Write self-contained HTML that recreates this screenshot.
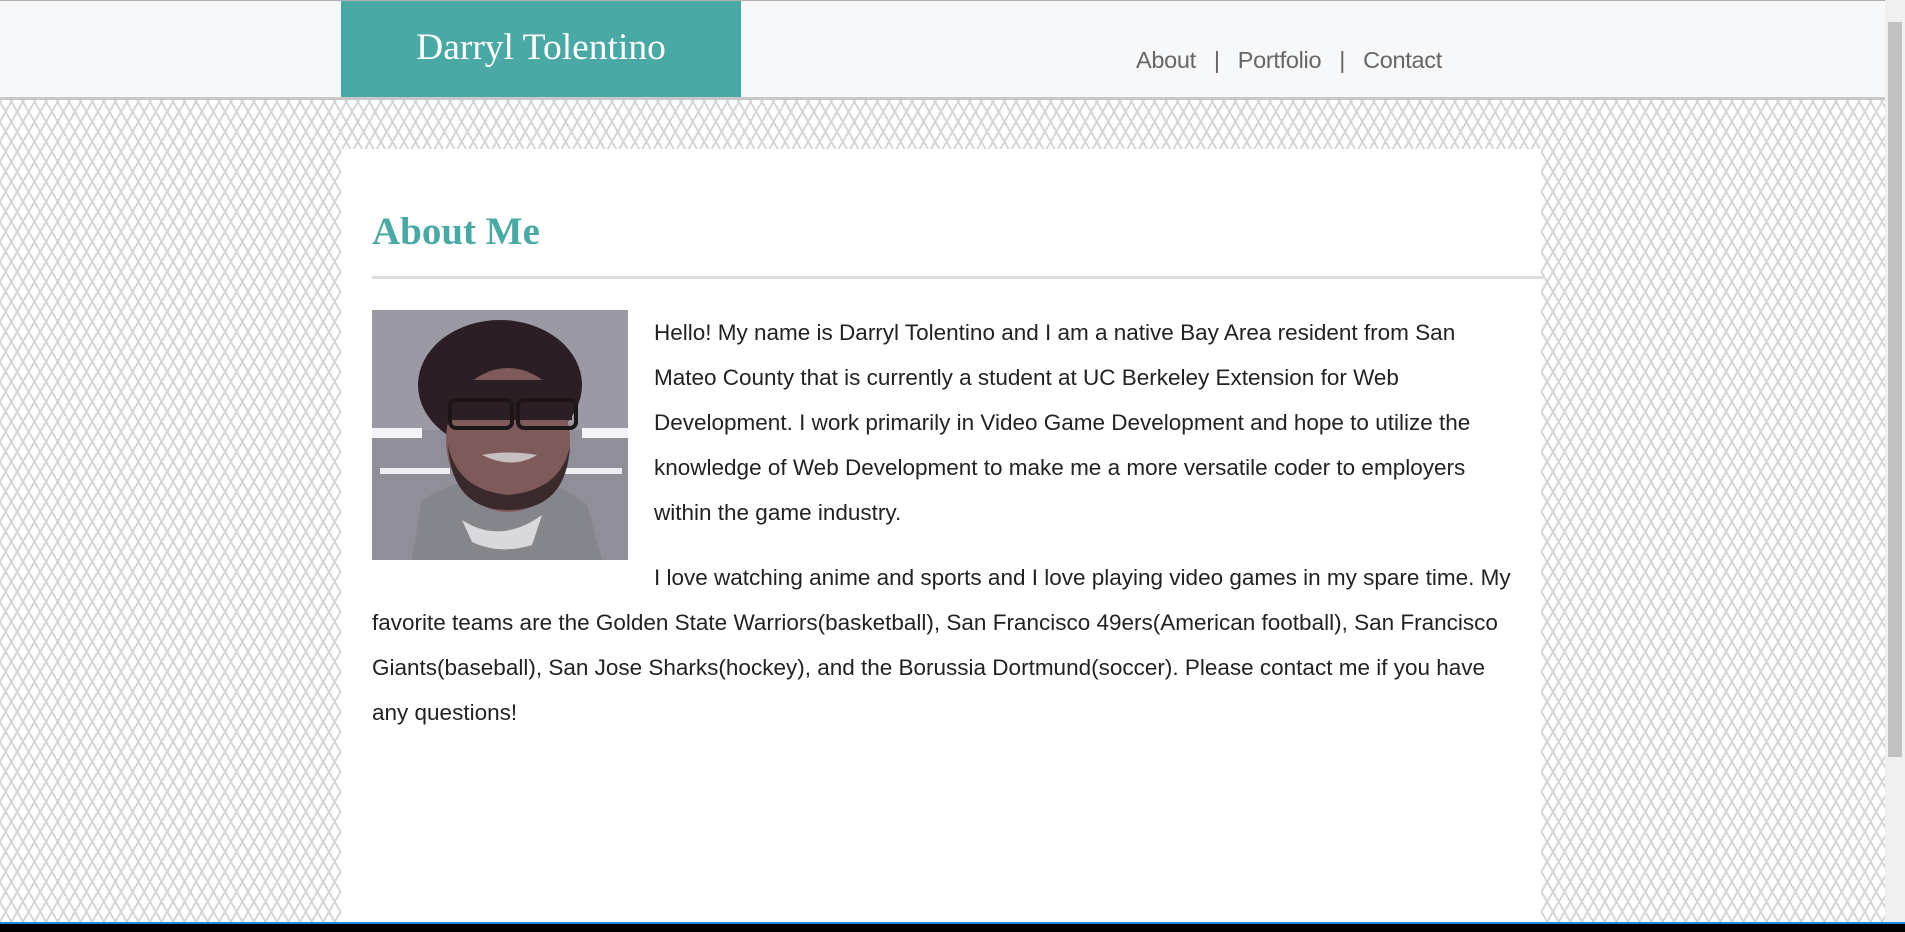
<!DOCTYPE html>
<html><head><meta charset="utf-8"><style>
html,body{margin:0;padding:0;width:1905px;height:932px;overflow:hidden}
body{position:relative;font-family:"Liberation Sans",Arial,sans-serif;
background-color:#fff;
background-image:
repeating-linear-gradient(60deg,transparent 0 4px,#d6d6d6 4px 6px,transparent 6px 10px),
repeating-linear-gradient(-60deg,transparent 0 4px,#d6d6d6 4px 6px,transparent 6px 10px);}
.hdr{position:absolute;left:0;top:0;width:1885px;height:96px;background:#f7f8fa;border-top:1px solid #b0b0b0;border-bottom:3px solid #c8c8c8;box-sizing:content-box}
.logo{position:absolute;left:341px;top:0px;width:400px;height:96px;background:#4aa9a5;color:#fff;font-family:"Liberation Serif",Georgia,serif;font-size:37.5px;text-align:center;line-height:93px}
.nav{position:absolute;left:1136px;top:46px;font-size:23.5px;color:#666;letter-spacing:-0.3px}
.nav span{margin:0 18px}
.box{position:absolute;left:341px;top:149px;width:1200px;height:773px;background:#fff}
h1{position:absolute;left:31px;top:60px;margin:0;font-family:"Liberation Serif",Georgia,serif;font-weight:bold;color:#4aa9a5;font-size:39px}
.hr{position:absolute;left:31px;top:127px;width:1173px;height:3px;background:#ddd}
.content{position:absolute;left:31px;top:161px;width:1143px;font-size:22.5px;line-height:45px;color:#222}
.content p{margin:0 0 20px}
.pic{float:left;width:256px;height:250px;margin:0 26px 10px 0}
.sb{position:absolute;right:0;top:0;width:20px;height:922px;background:#f0f0f0}
.thumb{position:absolute;left:3px;top:22px;width:14px;height:735px;background:#c1c1c1}
.tb{position:absolute;left:0;top:922px;width:1905px;height:10px;background:#000;border-top:2px solid #1e88e5;box-sizing:border-box}
</style></head><body>
<div class="hdr">
<div class="logo">Darryl Tolentino</div>
<div class="nav">About<span>|</span>Portfolio<span>|</span>Contact</div>
</div>
<div class="box">
<h1>About Me</h1>
<div class="hr"></div>
<div class="content">
<svg class="pic" viewBox="0 0 256 250" width="256" height="250">
<rect width="256" height="250" fill="#8f8e99"/>
<rect x="0" y="0" width="256" height="120" fill="#9a99a4"/>
<rect x="0" y="118" width="50" height="10" fill="#f4f4f8"/>
<rect x="210" y="118" width="46" height="10" fill="#f4f4f8"/>
<rect x="8" y="158" width="70" height="6" fill="#eeeef2"/>
<rect x="190" y="158" width="60" height="6" fill="#eeeef2"/>
<path d="M40 250 L50 190 Q90 165 130 170 Q180 165 215 195 L230 250Z" fill="#85858c"/>
<path d="M90 210 Q128 235 170 205 L160 235 Q128 245 100 232Z" fill="#d9d8dc"/>
<ellipse cx="128" cy="75" rx="82" ry="65" fill="#2b1e24"/>
<ellipse cx="136" cy="130" rx="62" ry="72" fill="#7e5a5a"/>
<path d="M76 135 Q80 200 136 200 Q195 200 198 135 Q190 180 136 185 Q85 180 76 135Z" fill="#3a2a2c"/>
<rect x="70" y="70" width="130" height="40" fill="#2b1e24"/>
<rect x="78" y="90" width="62" height="28" rx="6" fill="none" stroke="#1d1618" stroke-width="4"/>
<rect x="146" y="90" width="58" height="28" rx="6" fill="none" stroke="#1d1618" stroke-width="4"/>
<path d="M110 145 Q136 140 165 145 Q140 160 110 145Z" fill="#c8c0c0"/>
</svg>
<p>Hello! My name is Darryl Tolentino and I am a native Bay Area resident from San Mateo County that is currently a student at UC Berkeley Extension for Web Development. I work primarily in Video Game Development and hope to utilize the knowledge of Web Development to make me a more versatile coder to employers within the game industry.</p>
<p>I love watching anime and sports and I love playing video games in my spare time. My favorite teams are the Golden State Warriors(basketball), San Francisco 49ers(American football), San Francisco Giants(baseball), San Jose Sharks(hockey), and the Borussia Dortmund(soccer). Please contact me if you have any questions!</p>
</div>
</div>
<div class="sb"><div class="thumb"></div></div>
<div class="tb"></div>
</body></html>
